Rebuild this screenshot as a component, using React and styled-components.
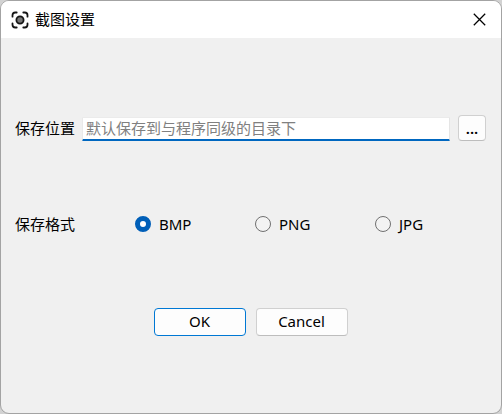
import React, { useState } from "react";
import styled, { createGlobalStyle } from "styled-components";

const GlobalStyle = createGlobalStyle`
  * { box-sizing: border-box; }
  html, body { margin: 0; padding: 0; background: #d2d2d2; overflow: hidden; }
  body, input, button {
    font-family: "Noto Sans", "Noto Sans CJK SC", sans-serif;
    font-size: 15px;
    color: #000;
  }
`;

const Dialog = styled.main`
  display: flex;
  flex-direction: column;
  width: 502px;
  height: 414px;
  border: 1px solid #a3a3a3;
  border-radius: 9px;
  background: #f0f0f0;
  overflow: hidden;
`;

const TitleBar = styled.header`
  display: flex;
  align-items: center;
  height: 37px;
  flex: none;
  padding: 0 15px 0 10px;
  background: #fff;
`;

const Title = styled.h1`
  flex: 1;
  margin: 0 0 0 6px;
  padding-bottom: 2px;
  font: 400 15px/20px "Noto Sans CJK SC", sans-serif;
`;

const CloseButton = styled.button`
  display: flex;
  padding: 0;
  border: 0;
  background: none;
`;

const PathRow = styled.div`
  display: flex;
  align-items: center;
  height: 26px;
  margin: 77px 15px 0 14px;
`;

const Label = styled.span`
  flex: none;
  width: 60px;
  font: 400 15px/20px "Noto Sans CJK SC", sans-serif;
`;

const PathInput = styled.input`
  width: 368px;
  height: 24px;
  margin: 2px 8px 0 7px;
  padding: 0 4px 2px 3px;
  border: 0;
  border-right: 1px solid #e5e5e5;
  border-top: 1px solid #ebebeb;
  border-left: 1px solid #e9e9e9;
  border-bottom: 2px solid #0067c0;
  border-radius: 1px;
  outline: 0;
  background: #fff;
  font-family: "Noto Sans CJK SC", sans-serif;
  &::placeholder { color: #808080; opacity: 1; }
`;

const Button = styled.button`
  display: flex;
  align-items: center;
  justify-content: center;
  width: ${(p) => p.$width}px;
  height: ${(p) => p.$height}px;
  padding: 0 1px 2px 0;
  border: 1px solid ${(p) => (p.$primary ? "#0078d4" : "#d0d0d0")};
  border-bottom-color: ${(p) => (p.$primary ? "#0078d4" : "#bdbdbd")};
  border-radius: 4px;
  background: #fdfdfd;
  line-height: 20px;
`;

const BrowseButton = styled(Button)`
  padding: 0 0 1px;
  font-weight: 600;
`;

const FormatRow = styled.div`
  display: flex;
  align-items: center;
  height: 20px;
  margin: 73px 0 0 14px;
`;

const FormatGroup = styled.div`
  display: grid;
  grid-template-columns: repeat(3, 120px);
  margin-left: 60px;
`;

const Option = styled.label`
  display: flex;
  align-items: center;
  gap: 8px;
  line-height: 20px;
`;

const Radio = styled.input.attrs({ type: "radio" })`
  appearance: none;
  width: 16px;
  height: 16px;
  margin: 0;
  border: 1px solid #707070;
  border-radius: 50%;
  background: #f3f3f3;
  &:checked {
    border: 5px solid #005fb8;
    background: #fff;
  }
`;

const Actions = styled.footer`
  display: flex;
  justify-content: center;
  gap: 10px;
  margin-top: 74px;
`;

function CaptureIcon() {
  return (
    <svg width="18" height="18" viewBox="0 0 18 18" fill="none" stroke="#151515" strokeWidth="1.8" strokeLinecap="round">
      <path d="M1.5 5.7V4.2Q1.5 1.5 4.2 1.5H5.7M12.3 1.5h1.5Q16.5 1.5 16.5 4.2V5.7M16.5 12.3v1.5q0 2.7-2.7 2.7h-1.5M5.7 16.5H4.2Q1.5 16.5 1.5 13.8V12.3" />
      <circle cx="9" cy="9" r="3.6" fill="#777" />
    </svg>
  );
}

function CloseIcon() {
  return (
    <svg width="13" height="13" viewBox="0 0 13 13" stroke="#000" strokeWidth="1.25">
      <path d="M.8.8l11.4 11.4M12.2.8L.8 12.2" />
    </svg>
  );
}

export default function App() {
  const [format, setFormat] = useState("BMP");
  return (
    <>
      <GlobalStyle />
      <Dialog>
        <TitleBar>
          <CaptureIcon />
          <Title>截图设置</Title>
          <CloseButton aria-label="Close"><CloseIcon /></CloseButton>
        </TitleBar>
        <PathRow>
          <Label>保存位置</Label>
          <PathInput placeholder="默认保存到与程序同级的目录下" />
          <BrowseButton $width={28} $height={26}>...</BrowseButton>
        </PathRow>
        <FormatRow>
          <Label>保存格式</Label>
          <FormatGroup>
            {["BMP", "PNG", "JPG"].map((name) => (
              <Option key={name}>
                <Radio name="format" checked={format === name} onChange={() => setFormat(name)} />
                {name}
              </Option>
            ))}
          </FormatGroup>
        </FormatRow>
        <Actions>
          <Button $width={92} $height={28} $primary>OK</Button>
          <Button $width={92} $height={28}>Cancel</Button>
        </Actions>
      </Dialog>
    </>
  );
}
